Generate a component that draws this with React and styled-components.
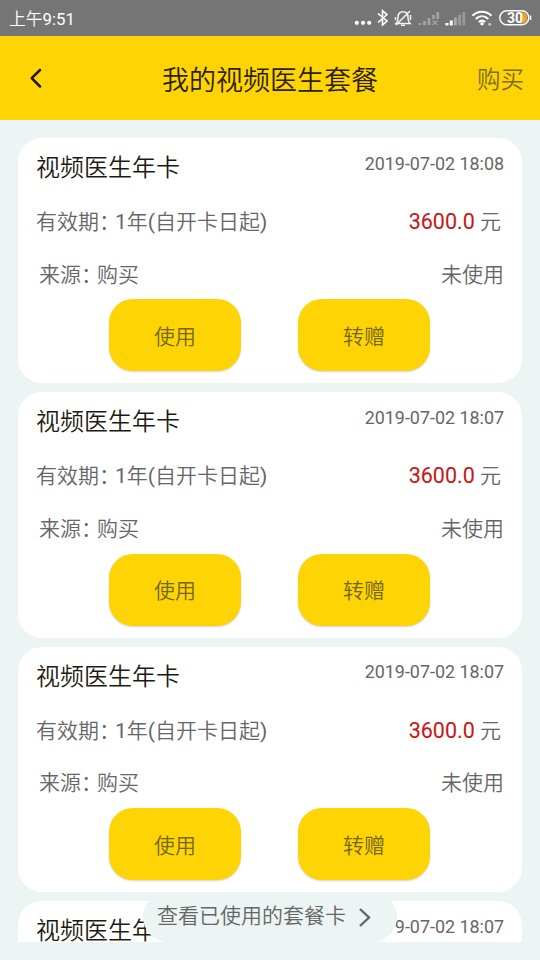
import React from "react";
import styled, { createGlobalStyle } from "styled-components";

const cards = [
  { id: 1, time: "2019-07-02 18:08" },
  { id: 2, time: "2019-07-02 18:07" },
  { id: 3, time: "2019-07-02 18:07" },
  { id: 4, time: "2019-07-02 18:07" },
];

const StatusIcons = () => (
  <svg width="180" height="24" viewBox="0 0 180 24" fill="none">
    {/* more */}
    <g fill="#fff">
      <circle cx="6.8" cy="16.8" r="2.1" />
      <circle cx="13" cy="16.8" r="2.1" />
      <circle cx="19.2" cy="16.8" r="2.1" />
    </g>
    {/* bluetooth */}
    <path d="M28 7.5L37 15L32.5 19V4.8L37 8.6L28 16.5" stroke="#fff" strokeWidth="1.6" />
    {/* muted bell */}
    <g stroke="#f4f4f4" strokeWidth="1.5">
      <path d="M46 17.5H60C58.3 16 58 14.5 58 11.5C58 7.5 56 5.8 53 5.8C50 5.8 48 7.5 48 11.5C48 14.5 47.7 16 46 17.5Z" />
      <path d="M51 19.3H55M45.5 11V14M60.5 9V14M46 19L60 5" />
    </g>
    {/* sim 1, no service */}
    <g fill="#a2a2a2">
      <rect x="68.5" y="17" width="2.8" height="2" />
      <rect x="73" y="15" width="2.8" height="4" />
      <rect x="77.5" y="12" width="2.8" height="7" />
      <rect x="82" y="9" width="2.8" height="4" />
      <rect x="86.3" y="6" width="2.8" height="7" />
    </g>
    <path d="M82.5 14.5L87.5 19M87.5 14.5L82.5 19" stroke="#a2a2a2" strokeWidth="1.5" />
    {/* sim 2 */}
    <rect x="95.5" y="17" width="3" height="2.4" fill="#fff" />
    <rect x="99.8" y="14.5" width="3" height="4.9" fill="#fff" />
    <rect x="104" y="11.5" width="2.8" height="7.9" fill="#aaa" />
    <rect x="108.2" y="8.7" width="2.8" height="10.7" fill="#999" />
    <rect x="112.4" y="6" width="2.8" height="13.4" fill="#999" />
    {/* wifi */}
    <g stroke="#fff" strokeWidth="2.1">
      <path d="M122.5 9.8C128 4.4 136 4.4 141.5 9.8" />
      <path d="M125.7 13C129.5 9.3 134.5 9.3 138.3 13" />
      <path d="M128.8 16C130.8 14.2 133.2 14.2 135.2 16" />
    </g>
    <circle cx="132" cy="17.8" r="1.7" fill="#fff" />
    <circle cx="139.7" cy="18.2" r="1.5" fill="#c4c4c4" />
    {/* battery */}
    <path d="M170 6.2H171.8C179 6.2 179 17.6 171.8 17.6H170Z" fill="#eda62b" />
    <rect x="149.8" y="4.8" width="29" height="14" rx="7" stroke="#fff" strokeWidth="1.4" />
    <path d="M180.6 9.5V14" stroke="#fff" strokeWidth="1.4" />
    <text x="165" y="16.8" textAnchor="middle" fill="#fff" fontFamily="Roboto, sans-serif" fontSize="14" fontWeight="700">
      30
    </text>
  </svg>
);

const PackageCard = ({ time }) => (
  <Card>
    <Row $height={56}>
      <CardTitle>视频医生年卡</CardTitle>
      <Time>{time}</Time>
    </Row>
    <Row $height={53}>
      <span>有效期<Colon>：</Colon>1年(自开卡日起)</span>
      <Price><b>3600.0</b> 元</Price>
    </Row>
    <Row $height={52.2}>
      <Source>来源<Colon>：</Colon>购买</Source>
      <span>未使用</span>
    </Row>
    <Actions>
      <ActionButton>使用</ActionButton>
      <ActionButton>转赠</ActionButton>
    </Actions>
  </Card>
);

const App = () => {
  return (
    <Screen>
      <GlobalStyle />
      <StatusBar>
        <Clock>上午9:51</Clock>
        <StatusIcons />
      </StatusBar>
      <Header>
        <Back>
          <svg width="14" height="22" viewBox="0 0 14 22" fill="none">
            <path d="M11 3L2.7 11.2L11 19.5" stroke="#1d1600" strokeWidth="2.5" strokeLinecap="round" strokeLinejoin="round" />
          </svg>
        </Back>
        <HeaderTitle>我的视频医生套餐</HeaderTitle>
        <Buy>购买</Buy>
      </Header>
      <List>
        {cards.map((card) => (
          <PackageCard key={card.id} time={card.time} />
        ))}
      </List>
      <UsedLink>
        <span>查看已使用的套餐卡</span>
        <svg width="14" height="22" viewBox="0 0 14 22" fill="none">
          <path d="M2 6L11 14.5L2 23" stroke="#626666" strokeWidth="2.4" />
        </svg>
      </UsedLink>
    </Screen>
  );
};

export default App;

const GlobalStyle = createGlobalStyle`
  * {
    box-sizing: border-box;
  }
  body {
    margin: 0;
    overflow: hidden;
    background: #ecf4f4;
  }
`;

const Screen = styled.div`
  position: relative;
  display: flex;
  flex-direction: column;
  width: 540px;
  height: 960px;
  overflow: hidden;
  background: #ecf4f4;
  color: #666;
  font-family: Roboto, "Noto Sans CJK SC DemiLight", "Noto Sans CJK SC", sans-serif;
  font-size: 21px;
  white-space: nowrap;
`;

const StatusBar = styled.div`
  display: flex;
  flex: none;
  justify-content: space-between;
  align-items: center;
  height: 36px;
  padding: 0 10px 0 9px;
  background: #757575;

  svg {
    display: block;
    overflow: visible;
  }
`;

const Clock = styled.span`
  padding-bottom: 1px;
  color: #fff;
  font-size: 16.8px;
`;

const Header = styled.header`
  display: grid;
  grid-template-columns: 100px 1fr 100px;
  flex: none;
  align-items: center;
  height: 84px;
  background: #ffd404;
`;

const Back = styled.div`
  display: flex;
  padding-left: 29px;
`;

const HeaderTitle = styled.h1`
  margin: 0;
  color: #2b1f05;
  font-size: 27px;
  font-weight: 400;
  text-align: center;
`;

const Buy = styled.span`
  padding: 0 16px 1px 0;
  color: #7d6c1d;
  font-size: 23.5px;
  text-align: right;
`;

const List = styled.main`
  display: flex;
  flex-direction: column;
  gap: 9.05px;
  height: 822px;
  padding: 18px 18px 0;
  overflow: hidden;
`;

const Card = styled.section`
  flex: none;
  height: 245.4px;
  border-radius: 24px;
  background: #fff;
`;

const Row = styled.div`
  display: flex;
  justify-content: space-between;
  align-items: center;
  height: ${(props) => props.$height}px;
  padding: 0 18px 1px;
`;

const CardTitle = styled.h2`
  margin: 0;
  color: #1c1a10;
  font-size: 24px;
  font-weight: 400;
`;

const Time = styled.span`
  padding-bottom: 5px;
  font-size: 17.9px;
`;

const Colon = styled.span`
  letter-spacing: -5px;
`;

const Price = styled.span`
  padding-right: 3px;

  b {
    color: #c41a1a;
    font-size: 21.5px;
    font-weight: 400;
    -webkit-text-stroke: 0.1px #c41a1a;
  }
`;

const Source = styled.span`
  padding-left: 3px;
`;

const Actions = styled.div`
  display: flex;
  gap: 57px;
  padding-left: 91px;
`;

const ActionButton = styled.button`
  width: 132px;
  height: 72px;
  padding: 0 0 1px;
  border: 0;
  border-radius: 24px;
  background: #ffd404;
  box-shadow: 0 1px 2px rgba(0, 0, 0, 0.18);
  color: #75661c;
  font: inherit;
`;

const UsedLink = styled.div`
  position: absolute;
  left: 143px;
  bottom: 18px;
  display: flex;
  align-items: center;
  gap: 12px;
  width: 254px;
  height: 50px;
  padding: 0 0 7px 14px;
  border-radius: 25px;
  background: #ecf4f4;

  svg {
    overflow: visible;
  }
`;
